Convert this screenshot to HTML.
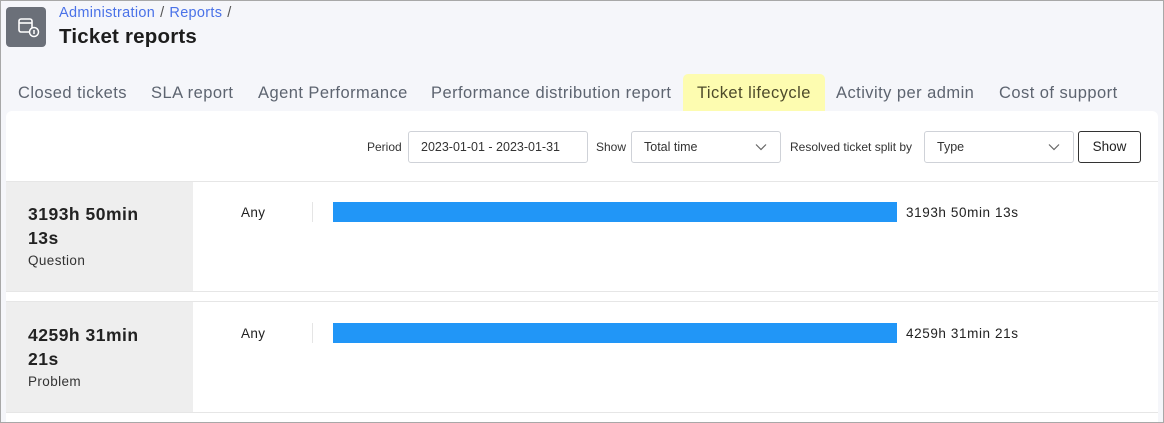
<!DOCTYPE html>
<html><head><style>
*{box-sizing:border-box;margin:0;padding:0}
body{width:1164px;height:423px;overflow:hidden;background:#f5f6fa;font-family:"Liberation Sans",Arial,sans-serif;position:relative}
.frame{position:absolute;left:0;top:0;width:1164px;height:423px;border:1px solid #a8a8a8;pointer-events:none;z-index:10}
.abs{position:absolute}
.icon{left:6px;top:7px;width:40px;height:40px;background:#6b7079;border-radius:4px}
.bc{left:59px;top:5px;font-size:14.5px;color:#4a72e8;letter-spacing:0.3px}
.bc span{color:#555;margin:0 5px}
h1{position:absolute;left:59px;top:25px;font-size:20.5px;font-weight:bold;color:#1d1d1d;letter-spacing:0.2px}
.tab{position:absolute;top:84px;font-size:16.5px;color:#5d6470;letter-spacing:0.45px}
.act{left:683px;top:74px;width:142px;height:38px;background:#fdfcb0;border-radius:5px 5px 0 0}
.card{left:6px;top:111px;width:1152px;height:312px;background:#fff;border-radius:6px 6px 0 0}
.lbl{font-size:12px;color:#333;top:140px}
.inp{top:131px;height:32px;border:1px solid #cfd2d8;border-radius:3px;background:#fff;font-size:12.5px;color:#333;padding:8px 12px}
.chev{position:absolute;right:12px;top:8px}
.btn{left:1078px;top:131px;width:63px;height:32px;border:1px solid #333;border-radius:3px;font-size:13.5px;color:#222;text-align:center;line-height:30px}
.hl{left:6px;width:1152px;height:1px;background:#e6e6e6}
.gray{left:6px;width:187px;background:#eeeeee}
.big{left:28px;font-size:17.5px;font-weight:bold;color:#222;line-height:24px;letter-spacing:0.5px}
.sub{left:28px;font-size:13.5px;color:#333;letter-spacing:0.4px}
.any{left:241px;font-size:13.5px;color:#222;letter-spacing:0.4px}
.vl{left:312px;width:1px;height:20px;background:#e5e5e5}
.bar{left:333px;width:564px;height:20px;background:#2196f7}
.val{left:906px;font-size:13.5px;color:#222;letter-spacing:0.6px}
</style></head><body>
<div class="abs icon"><svg width="40" height="40" viewBox="0 0 40 40"><rect x="13" y="12" width="13" height="13" rx="2" fill="none" stroke="#fff" stroke-width="1.6"/><line x1="13" y1="16" x2="26" y2="16" stroke="#fff" stroke-width="1.6"/><circle cx="28" cy="25" r="4.5" fill="#6b7079" stroke="#fff" stroke-width="1.5"/><line x1="28" y1="23" x2="28" y2="27" stroke="#fff" stroke-width="1.5"/></svg></div>
<div class="abs bc">Administration<span>/</span>Reports<span>/</span></div>
<h1>Ticket reports</h1>
<div class="abs act"></div>
<div class="tab" style="left:18px">Closed tickets</div>
<div class="tab" style="left:151px">SLA report</div>
<div class="tab" style="left:258px">Agent Performance</div>
<div class="tab" style="left:431px">Performance distribution report</div>
<div class="tab" style="left:697px;color:#4d4a2a">Ticket lifecycle</div>
<div class="tab" style="left:836px">Activity per admin</div>
<div class="tab" style="left:999px">Cost of support</div>
<div class="abs card"></div>
<div class="abs lbl" style="left:367px">Period</div>
<div class="abs inp" style="left:408px;width:180px">2023-01-01 - 2023-01-31</div>
<div class="abs lbl" style="left:596px">Show</div>
<div class="abs inp" style="left:631px;width:150px">Total time<svg class="chev" width="14" height="14" viewBox="0 0 14 14"><path d="M2 4.5l5 5 5-5" fill="none" stroke="#666" stroke-width="1.2"/></svg></div>
<div class="abs lbl" style="left:790px">Resolved ticket split by</div>
<div class="abs inp" style="left:924px;width:150px">Type<svg class="chev" width="14" height="14" viewBox="0 0 14 14"><path d="M2 4.5l5 5 5-5" fill="none" stroke="#666" stroke-width="1.2"/></svg></div>
<div class="abs btn">Show</div>
<div class="abs hl" style="top:181px"></div>
<div class="abs gray" style="top:182px;height:109px"></div>
<div class="abs hl" style="top:291px"></div>
<div class="abs hl" style="top:301px"></div>
<div class="abs gray" style="top:302px;height:110px"></div>
<div class="abs hl" style="top:412px"></div>
<div class="abs big" style="top:202px">3193h 50min<br>13s</div>
<div class="abs sub" style="top:253px">Question</div>
<div class="abs any" style="top:205px">Any</div>
<div class="abs vl" style="top:202px"></div>
<div class="abs bar" style="top:202px"></div>
<div class="abs val" style="top:205px">3193h 50min 13s</div>
<div class="abs big" style="top:323px">4259h 31min<br>21s</div>
<div class="abs sub" style="top:374px">Problem</div>
<div class="abs any" style="top:326px">Any</div>
<div class="abs vl" style="top:323px"></div>
<div class="abs bar" style="top:323px"></div>
<div class="abs val" style="top:326px">4259h 31min 21s</div>
<div class="frame"></div>
</body></html>
